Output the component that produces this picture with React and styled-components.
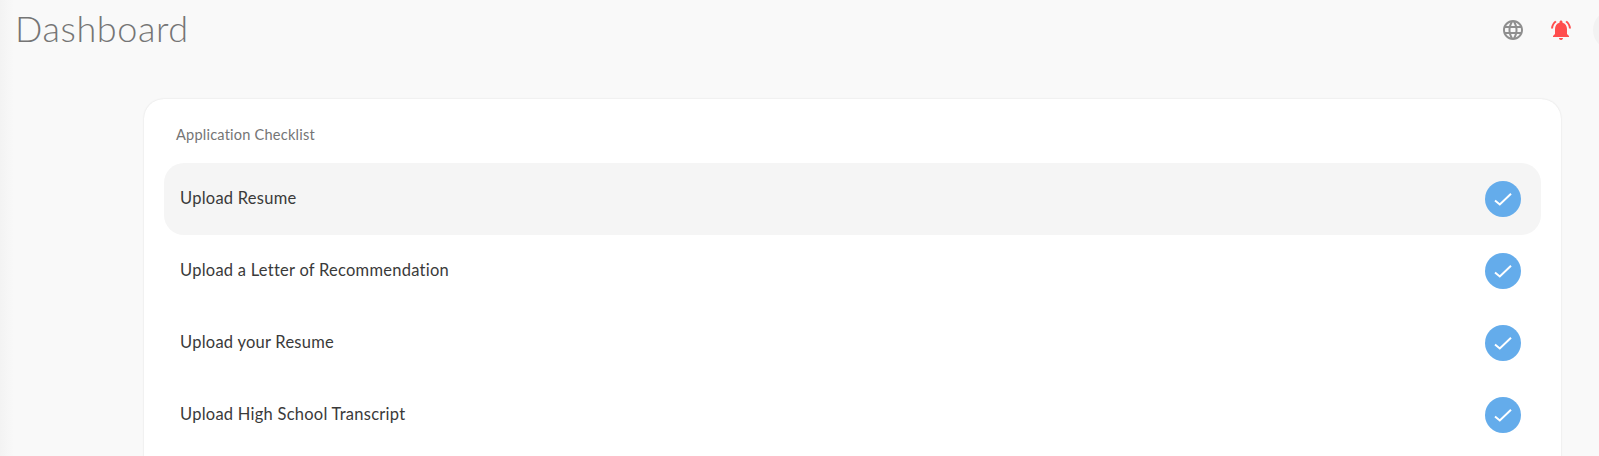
import React from "react";
import styled, { createGlobalStyle } from "styled-components";
import { MdLanguage, MdNotificationsActive } from "react-icons/md";

const Global = createGlobalStyle`
  html, body { margin: 0; padding: 0; height: 100%; overflow: hidden; background: #f9f9f9; }
  body { font-family: "Lato", "Open Sans", sans-serif; }
`;

const Page = styled.div`
  width: 1599px;
  height: 456px;
  overflow: hidden;
  position: relative;
  background: #f9f9f9;
  &::before {
    content: "";
    position: absolute;
    left: 0; top: 0; bottom: 0;
    width: 14px;
    background: linear-gradient(to right, #f3f3f3, #f9f9f9);
  }
`;

const Header = styled.header`
  height: 59px;
  display: flex;
  align-items: center;
  justify-content: space-between;
  padding-left: 15px;
  position: relative;
`;

const Title = styled.h1`
  margin: 0 0 4px;
  font-size: 36px;
  font-weight: 300;
  color: #757575;
  letter-spacing: 0.6px;
`;

const Actions = styled.div`
  display: flex;
  align-items: center;
  gap: 24px;
  margin-right: -34px;
`;

const IconSlot = styled.span`
  display: inline-flex;
  width: 24px;
  height: 24px;
  align-items: center;
  justify-content: center;
  color: ${(p) => p.$color};
  font-size: 24px;
`;

const Avatar = styled.span`
  display: block;
  width: 40px;
  height: 40px;
  margin-left: -4px;
  border-radius: 50%;
  background: #f2f2f2;
`;

const Content = styled.main`
  padding: 40px 38px 0 144px;
`;

const Card = styled.section`
  background: #fff;
  border-radius: 20px;
  box-shadow: 0 0 2px rgba(0,0,0,0.12);
  padding: 16px 20px 60px;
`;

const CardTitle = styled.h2`
  margin: 0 0 10px;
  padding: 0 12px;
  height: 38px;
  display: flex;
  align-items: center;
  font-size: 14.6px;
  font-weight: 400;
  letter-spacing: 0.2px;
  color: #757575;
`;

const Row = styled.div`
  height: 72px;
  display: flex;
  align-items: center;
  justify-content: space-between;
  padding: 0 20px 0 16px;
  border-radius: 20px;
  background: ${(p) => (p.$active ? "#f5f5f5" : "transparent")};
`;

const Label = styled.span`
  font-size: 16.5px;
  letter-spacing: 0.25px;
  color: #3a3a3a;
  margin-bottom: 3px;
`;

const Check = styled.span`
  width: 36px;
  height: 36px;
  border-radius: 50%;
  background: #64aceb;
  display: flex;
  align-items: center;
  justify-content: center;
`;

const items = [
  "Upload Resume",
  "Upload a Letter of Recommendation",
  "Upload your Resume",
  "Upload High School Transcript",
];

export default function App() {
  return (
    <Page>
      <Global />
      <Header>
        <Title>Dashboard</Title>
        <Actions>
          <IconSlot $color="#8f8f8f"><MdLanguage /></IconSlot>
          <IconSlot $color="#ff4d4d"><MdNotificationsActive /></IconSlot>
          <Avatar />
        </Actions>
      </Header>
      <Content>
        <Card>
          <CardTitle>Application Checklist</CardTitle>
          {items.map((t, i) => (
            <Row key={t} $active={i === 0}>
              <Label>{t}</Label>
              <Check>
                <svg width="20" height="20" viewBox="0 0 20 20" fill="none" stroke="#fff" strokeWidth="2">
                  <path d="M2 11.500l4.800 4L18 4.700" />
                </svg>
              </Check>
            </Row>
          ))}
        </Card>
      </Content>
    </Page>
  );
}
